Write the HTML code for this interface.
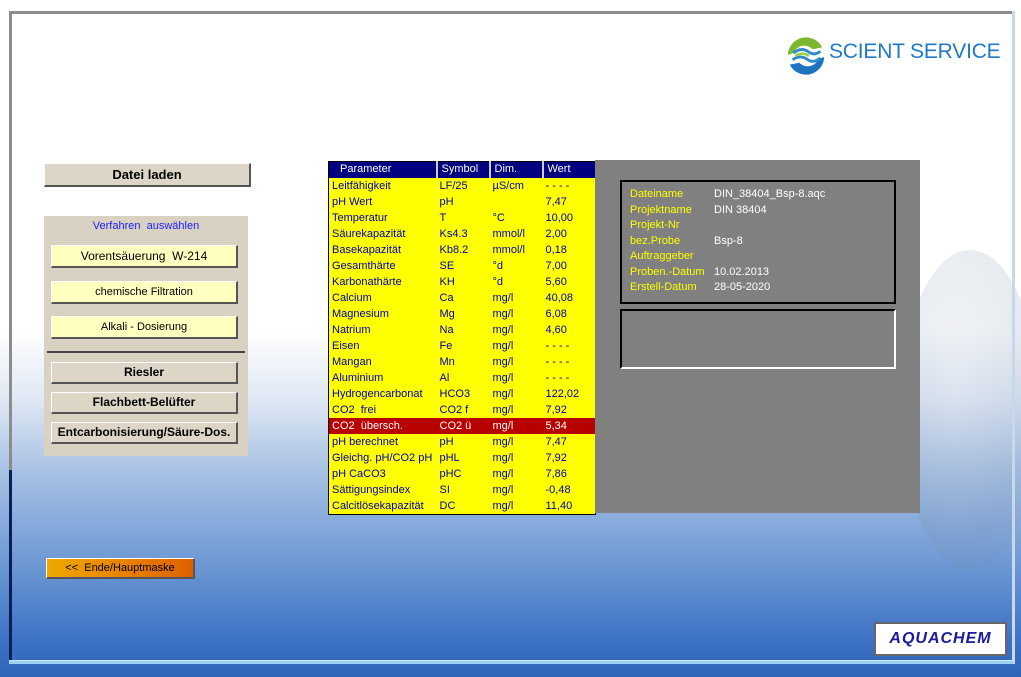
<!DOCTYPE html>
<html><head><meta charset="utf-8"><style>
*{margin:0;padding:0;box-sizing:border-box}
body{width:1021px;height:677px;overflow:hidden;position:relative;font-family:"Liberation Sans",sans-serif;
background:linear-gradient(to bottom,#fff 0px,#fff 330px,#dfe8f4 400px,#a9c2e4 470px,#6f9ad4 560px,#3d72c4 640px,#2f64b8 677px);}
.frame{position:absolute;left:9px;top:11px;width:1004px;height:653px;border-top:3px solid #8c8c8c;border-left:3px solid #8c8c8c;}
.frameb{position:absolute;left:9px;top:660px;width:1004px;height:4px;background:#9cd0f4;border-top:1px solid #cfe9fb}
.framel{position:absolute;left:9px;top:470px;width:3px;height:194px;background:#0a1e5a}
.framer{position:absolute;left:1012px;top:11px;width:3px;height:653px;background:#c8d8ec}
.drop{position:absolute;left:900px;top:250px;width:140px;height:320px;border-radius:50%;background:radial-gradient(ellipse at 40% 40%,rgba(200,210,225,.25),rgba(120,140,170,.18) 60%,rgba(120,150,190,0));}
.abs{position:absolute}
.btn{position:absolute;border-top:1px solid #fff;border-left:1px solid #fff;border-right:2px solid #555;border-bottom:2px solid #555;text-align:center;font-size:12px;color:#000}
table{position:absolute;left:328px;top:161px;border-collapse:collapse;border:1px solid #000;font-size:11px;background:#ffff00;color:#0000b0}
td{height:16px;padding:0 0 0 3px;white-space:nowrap;line-height:16px}
th{height:16px;background:#000080;color:#fff;font-weight:normal;text-align:left;padding-left:4px;border-left:2px solid #ccc;line-height:15px}
th:first-child{border-left:none;padding-left:11px}
tr.hl td{background:#b80000;color:#fff}
.info{font-size:11px;line-height:15.5px}
.info div{height:15.5px}
.y{color:#ffff00;position:absolute;left:8px}
.w{color:#fff;position:absolute;left:92px}
</style></head><body>
<div class="drop"></div>
<div class="frame"></div><div class="framel"></div><div class="framer"></div><div class="frameb"></div>

<svg class="abs" style="left:784px;top:34px" width="44" height="44" viewBox="0 0 46 46">
<circle cx="23" cy="23" r="21" fill="#fff"/>
<path d="M4 22 A19 19 0 0 1 40 14 L30 16 A12 12 0 0 0 10 20Z" fill="#7cb82f"/>
<path d="M42 24 A19 19 0 0 1 6 32 L16 30 A12 12 0 0 0 36 26Z" fill="#1e73c0"/>
<path d="M10 20 Q18 13 26 19 Q32 23 38 18" stroke="#2d8ad0" stroke-width="3" fill="none"/>
<path d="M9 27 Q17 21 25 27 Q31 31 38 25" stroke="#2d8ad0" stroke-width="3" fill="none"/>
<path d="M12 23 Q19 18 26 23" stroke="#9ccf3a" stroke-width="2.5" fill="none"/>
</svg>
<div class="abs" style="left:829px;top:40px;font-size:21px;color:#1f78c8;letter-spacing:-0.2px">SCIENT SERVICE</div>

<div class="btn" style="left:44px;top:163px;width:207px;height:24px;background:#ddd6c6;font-weight:bold;font-size:13px;line-height:22px">Datei laden</div>
<div class="abs" style="left:44px;top:216px;width:204px;height:240px;background:#d9d2c2"></div>
<div class="abs" style="left:44px;top:220px;width:204px;text-align:center;font-size:11px;color:#1a1aff">Verfahren&nbsp; auswählen</div>
<div class="btn" style="left:51px;top:245px;width:187px;height:23px;background:#ffffc0;line-height:20px">Vorentsäuerung&nbsp; W-214</div>
<div class="btn" style="left:51px;top:281px;width:187px;height:23px;background:#ffffc0;font-size:11px;line-height:20px">chemische Filtration</div>
<div class="btn" style="left:51px;top:316px;width:187px;height:23px;background:#ffffc0;font-size:11px;line-height:20px">Alkali - Dosierung</div>
<div class="abs" style="left:47px;top:351px;width:198px;height:2px;background:#444"></div>
<div class="btn" style="left:51px;top:362px;width:187px;height:22px;background:#ddd6c6;font-weight:bold;line-height:19px">Riesler</div>
<div class="btn" style="left:51px;top:392px;width:187px;height:22px;background:#ddd6c6;font-weight:bold;line-height:19px">Flachbett-Belüfter</div>
<div class="btn" style="left:51px;top:422px;width:187px;height:22px;background:#ddd6c6;font-weight:bold;line-height:19px">Entcarbonisierung/Säure-Dos.</div>

<div class="btn" style="left:46px;top:558px;width:149px;height:21px;background:linear-gradient(to right,#f0a800,#e06000);font-size:11px;line-height:18px">&lt;&lt;&nbsp; Ende/Hauptmaske</div>

<table>
<tr><th style="width:108px">Parameter</th><th style="width:53px">Symbol</th><th style="width:53px">Dim.</th><th style="width:53px">Wert</th></tr>
<tr><td>Leitfähigkeit</td><td>LF/25</td><td>µS/cm</td><td>- - - -</td></tr>
<tr><td>pH Wert</td><td>pH</td><td></td><td>7,47</td></tr>
<tr><td>Temperatur</td><td>T</td><td>°C</td><td>10,00</td></tr>
<tr><td>Säurekapazität</td><td>Ks4.3</td><td>mmol/l</td><td>2,00</td></tr>
<tr><td>Basekapazität</td><td>Kb8.2</td><td>mmol/l</td><td>0,18</td></tr>
<tr><td>Gesamthärte</td><td>SE</td><td>°d</td><td>7,00</td></tr>
<tr><td>Karbonathärte</td><td>KH</td><td>°d</td><td>5,60</td></tr>
<tr><td>Calcium</td><td>Ca</td><td>mg/l</td><td>40,08</td></tr>
<tr><td>Magnesium</td><td>Mg</td><td>mg/l</td><td>6,08</td></tr>
<tr><td>Natrium</td><td>Na</td><td>mg/l</td><td>4,60</td></tr>
<tr><td>Eisen</td><td>Fe</td><td>mg/l</td><td>- - - -</td></tr>
<tr><td>Mangan</td><td>Mn</td><td>mg/l</td><td>- - - -</td></tr>
<tr><td>Aluminium</td><td>Al</td><td>mg/l</td><td>- - - -</td></tr>
<tr><td>Hydrogencarbonat</td><td>HCO3</td><td>mg/l</td><td>122,02</td></tr>
<tr><td>CO2&nbsp; frei</td><td>CO2 f</td><td>mg/l</td><td>7,92</td></tr>
<tr class="hl"><td>CO2&nbsp; übersch.</td><td>CO2 ü</td><td>mg/l</td><td>5,34</td></tr>
<tr><td>pH berechnet</td><td>pH</td><td>mg/l</td><td>7,47</td></tr>
<tr><td>Gleichg. pH/CO2 pH</td><td>pHL</td><td>mg/l</td><td>7,92</td></tr>
<tr><td>pH CaCO3</td><td>pHC</td><td>mg/l</td><td>7,86</td></tr>
<tr><td>Sättigungsindex</td><td>SI</td><td>mg/l</td><td>-0,48</td></tr>
<tr><td>Calcitlösekapazität</td><td>DC</td><td>mg/l</td><td>11,40</td></tr>
</table>

<div class="abs" style="left:595px;top:160px;width:325px;height:353px;background:#808080"></div>
<div class="abs info" style="left:620px;top:180px;width:276px;height:124px;border:2px solid #000;padding-top:5px">
<div><span class="y">Dateiname</span><span class="w">DIN_38404_Bsp-8.aqc</span></div>
<div><span class="y">Projektname</span><span class="w">DIN 38404</span></div>
<div><span class="y">Projekt-Nr</span></div>
<div><span class="y">bez.Probe</span><span class="w">Bsp-8</span></div>
<div><span class="y">Auftraggeber</span></div>
<div><span class="y">Proben.-Datum</span><span class="w">10.02.2013</span></div>
<div><span class="y">Erstell-Datum</span><span class="w">28-05-2020</span></div>
</div>
<div class="abs" style="left:620px;top:309px;width:276px;height:60px;border-top:2px solid #000;border-left:2px solid #000;border-right:2px solid #fff;border-bottom:2px solid #fff"></div>

<div class="abs" style="left:874px;top:622px;width:133px;height:34px;background:#fff;border:2px solid #666;text-align:center;font-weight:bold;font-style:italic;font-size:16px;color:#1a1a9a;line-height:30px;letter-spacing:1px">AQUACHEM</div>
</body></html>
